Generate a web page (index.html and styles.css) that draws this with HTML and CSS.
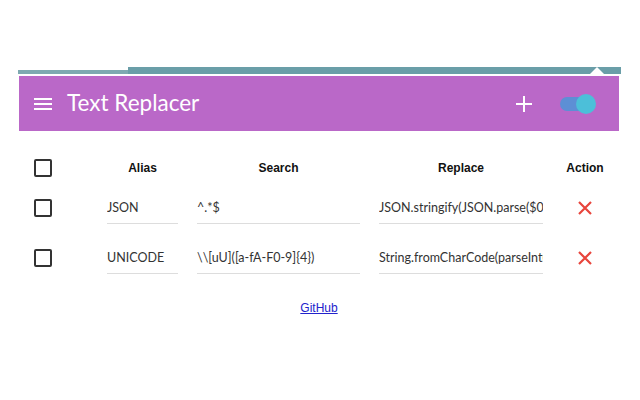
FILE: index.html
```html
<!DOCTYPE html>
<html>
<head>
<meta charset="utf-8">
<link rel="stylesheet" href="styles.css">
</head>
<body>
<div class="popup">
  <div class="chrome-bar">
    <div class="bar-left"></div>
    <div class="bar-right"></div>
    <div class="arrow"></div>
  </div>
  <header class="appbar">
    <div class="menu"><span></span><span></span><span></span></div>
    <h1 class="title">Text Replacer</h1>
    <div class="spacer"></div>
    <svg class="plus" width="16" height="16" viewBox="0 0 16 16"><path d="M8 0v16M0 8h16" stroke="#fff" stroke-width="2"/></svg>
    <div class="toggle"><div class="track"></div><div class="knob"></div></div>
  </header>
  <main class="table">
    <div class="row head">
      <div class="cell"><span class="checkbox"></span></div>
      <div class="cell th">Alias</div>
      <div class="cell th">Search</div>
      <div class="cell th">Replace</div>
      <div class="cell th">Action</div>
    </div>
    <div class="row">
      <div class="cell"><span class="checkbox"></span></div>
      <div class="cell"><input class="field" value="JSON"></div>
      <div class="cell"><input class="field" value="^.*$"></div>
      <div class="cell"><input class="field" value="JSON.stringify(JSON.parse($0))"></div>
      <div class="cell act"><svg width="16" height="16" viewBox="0 0 16 16"><path d="M2 2L14 14M14 2L2 14" stroke="#e8453c" stroke-width="2.2"/></svg></div>
    </div>
    <div class="row">
      <div class="cell"><span class="checkbox"></span></div>
      <div class="cell"><input class="field" value="UNICODE"></div>
      <div class="cell"><input class="field" value="\\[uU]([a-fA-F0-9]{4})"></div>
      <div class="cell"><input class="field" value="String.fromCharCode(parseInt($1, 16))"></div>
      <div class="cell act"><svg width="16" height="16" viewBox="0 0 16 16"><path d="M2 2L14 14M14 2L2 14" stroke="#e8453c" stroke-width="2.2"/></svg></div>
    </div>
  </main>
  <footer class="foot"><a href="#">GitHub</a></footer>
</div>
</body>
</html>
```
FILE: styles.css
```css
html, body { margin: 0; padding: 0; background: #fff; }
body { font-family: "Liberation Sans", Arial, sans-serif; }
.popup { padding-top: 67px; margin-left: 18px; width: 603px; }
.chrome-bar { position: relative; display: flex; align-items: flex-end; height: 7px; }
.bar-left { width: 110px; height: 4px; background: #7ea9b1; }
.bar-right { flex: 1; height: 7px; background: #6a9ea8; }
.arrow { position: absolute; left: 572px; top: 0; width: 0; height: 0;
  border-left: 7px solid transparent; border-right: 7px solid transparent; border-bottom: 7px solid #fff; }
.appbar { margin: 2px 2px 0 1px; height: 55px; background: #ba68c8; display: flex; align-items: center; padding-left: 15px; padding-right: 23px; }
.menu { display: flex; flex-direction: column; gap: 3px; width: 18px; }
.menu span { display: block; height: 2px; background: #fff; }
.title { margin: 0 0 3px 15px; font-family: "Lato", sans-serif; font-weight: 400; font-size: 22.5px; color: #fff; letter-spacing: 0; }
.spacer { flex: 1; }
.plus { margin-right: 28px; }
.toggle { position: relative; width: 36px; height: 20px; }
.track { position: absolute; left: 0; top: 3px; width: 28px; height: 14px; border-radius: 7px; background: #5d8fd5; }
.knob { position: absolute; right: 0; top: 0; width: 20px; height: 20px; border-radius: 50%; background: #4cbfd9; }
.table { padding-left: 16px; padding-top: 20px; }
.row { display: grid; grid-template-columns: 54px 71px 163px 164px 46px; column-gap: 19px; height: 33px; margin-bottom: 17px; align-items: center; }
.row.head { margin-bottom: 7px; }
.cell { height: 33px; display: flex; align-items: center; }
.th { justify-content: center; font-weight: bold; font-size: 12px; color: #111; }
.checkbox { display: block; width: 14px; height: 14px; border: 2px solid #333; border-radius: 2px; }
.field { width: 100%; height: 33px; box-sizing: border-box; border: 0; border-bottom: 1px solid #ddd; padding: 0; margin: 0; outline: none;
  font-family: "Lato", sans-serif; font-size: 12.5px; color: #333; background: transparent; }
.act { justify-content: center; }
.foot { text-align: center; padding-top: 7px; margin-left: -1px; }
.foot a { font-size: 12px; color: #2222cc; }
```
